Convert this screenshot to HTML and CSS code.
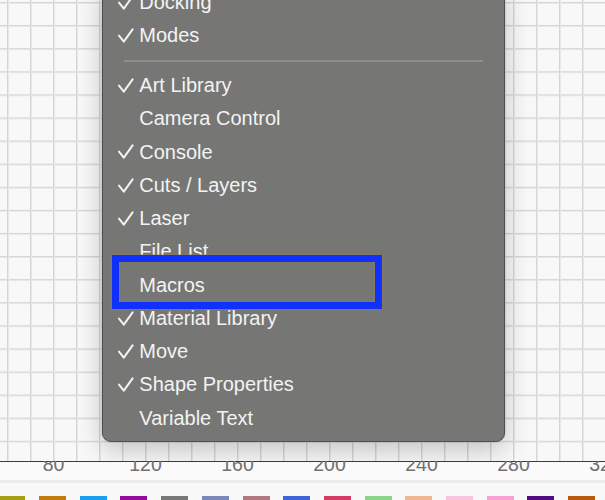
FILE: index.html
```html
<!DOCTYPE html>
<html>
<head>
<meta charset="utf-8">
<link rel="stylesheet" href="styles.css">
</head>
<body>
<div class="canvas">
  <div class="menu">
    <div class="item"><span class="mark"><svg viewBox="0 0 16 15" width="16" height="15"><path d="M1 7.6 L5.8 13.6 L14.6 1.4"/></svg></span>Docking</div>
    <div class="item"><span class="mark"><svg viewBox="0 0 16 15" width="16" height="15"><path d="M1 7.6 L5.8 13.6 L14.6 1.4"/></svg></span>Modes</div>
    <div class="sep"></div>
    <div class="item"><span class="mark"><svg viewBox="0 0 16 15" width="16" height="15"><path d="M1 7.6 L5.8 13.6 L14.6 1.4"/></svg></span>Art Library</div>
    <div class="item"><span class="mark"></span>Camera Control</div>
    <div class="item"><span class="mark"><svg viewBox="0 0 16 15" width="16" height="15"><path d="M1 7.6 L5.8 13.6 L14.6 1.4"/></svg></span>Console</div>
    <div class="item"><span class="mark"><svg viewBox="0 0 16 15" width="16" height="15"><path d="M1 7.6 L5.8 13.6 L14.6 1.4"/></svg></span>Cuts / Layers</div>
    <div class="item"><span class="mark"><svg viewBox="0 0 16 15" width="16" height="15"><path d="M1 7.6 L5.8 13.6 L14.6 1.4"/></svg></span>Laser</div>
    <div class="item"><span class="mark"></span>File List</div>
    <div class="item"><span class="mark"></span>Macros</div>
    <div class="item"><span class="mark"><svg viewBox="0 0 16 15" width="16" height="15"><path d="M1 7.6 L5.8 13.6 L14.6 1.4"/></svg></span>Material Library</div>
    <div class="item"><span class="mark"><svg viewBox="0 0 16 15" width="16" height="15"><path d="M1 7.6 L5.8 13.6 L14.6 1.4"/></svg></span>Move</div>
    <div class="item"><span class="mark"><svg viewBox="0 0 16 15" width="16" height="15"><path d="M1 7.6 L5.8 13.6 L14.6 1.4"/></svg></span>Shape Properties</div>
    <div class="item"><span class="mark"></span>Variable Text</div>
  </div>
  <div class="highlight"></div>
</div>
<div class="ruler">
  <span class="tick">80</span>
  <span class="tick">120</span>
  <span class="tick">160</span>
  <span class="tick">200</span>
  <span class="tick">240</span>
  <span class="tick">280</span>
  <span class="tick">320</span>
</div>
<div class="band"></div>
<div class="palette">
  <span class="sw c1"></span>
  <span class="sw c2"></span>
  <span class="sw c3"></span>
  <span class="sw c4"></span>
  <span class="sw c5"></span>
  <span class="sw c6"></span>
  <span class="sw c7"></span>
  <span class="sw c8"></span>
  <span class="sw c9"></span>
  <span class="sw c10"></span>
  <span class="sw c11"></span>
  <span class="sw c12"></span>
  <span class="sw c13"></span>
  <span class="sw c14"></span>
  <span class="sw c15"></span>
</div>
</body>
</html>
```
FILE: styles.css
```css
html, body {
  margin: 0;
  padding: 0;
  width: 605px;
  height: 500px;
  overflow: hidden;
  background: #f8f8f8;
  font-family: "Liberation Sans", Arial, sans-serif;
}

.canvas {
  position: relative;
  height: 460.5px;
  overflow: hidden;
  background-color: #f8f8f8;
  background-image:
    linear-gradient(to right, #d5d5d5 0 1px, #e8e8e8 1px 2px, transparent 2px),
    linear-gradient(to bottom, #d5d5d5 0 1px, #e8e8e8 1px 2px, transparent 2px);
  background-size: 23px 100%, 100% 23.1px;
  background-position: 7px 0, 0 2px;
}

.menu {
  position: absolute;
  left: 102px;
  top: -15.1px;
  width: 401px;
  padding-bottom: 6.5px;
  background: #767775;
  border: 1px solid #4e4f4e;
  border-radius: 0 0 9px 9px;
  box-shadow: 0 0 0 0.5px rgba(170,170,170,0.6), 0 8px 26px rgba(0,0,0,0.22);
  color: #f3f3f3;
  font-size: 20px;
}

.item {
  display: flex;
  align-items: center;
  height: 33.25px;
  line-height: 33.25px;
  padding-left: 15.3px;
  white-space: nowrap;
}

.mark {
  display: flex;
  align-items: center;
  width: 21px;
  height: 15px;
  flex: 0 0 21px;
  margin-top: -1px;
}

.mark svg path {
  fill: none;
  stroke: #f3f3f3;
  stroke-width: 2;
  stroke-linecap: round;
  stroke-linejoin: round;
}

.sep {
  height: 16.75px;
  display: flex;
  align-items: center;
  padding: 0 21px 0 21px;
}

.sep::before {
  content: "";
  display: block;
  flex: 1;
  height: 1.5px;
  background: #8e8f8d;
}

.highlight {
  position: absolute;
  left: 112px;
  top: 255px;
  width: 256.3px;
  height: 39.5px;
  border: 7.5px solid #0f31fb;
  box-shadow: 0 0 0 0.6px rgba(150,130,70,0.7), inset 0 0 0 0.6px rgba(150,130,70,0.7);
}

.ruler {
  display: flex;
  height: 18px;
  padding-left: 7.5px;
  border-top: 1.5px solid #3b3b3b;
  background: #fafafa;
}

.tick {
  flex: 0 0 92px;
  text-align: center;
  font-size: 19.5px;
  line-height: 19px;
  height: 19px;
  margin-top: -6.6px;
  color: #707070;
}

.band {
  height: 3.5px;
  background: #ececec;
}

.palette {
  display: flex;
  gap: 13.7px;
  padding-top: 13.2px;
  margin-left: -1.6px;
  background: #f8f8f8;
}

.sw {
  flex: 0 0 27px;
  height: 12px;
}

.c1 { background: #a39e12; }
.c2 { background: #c27c0e; }
.c3 { background: #1a9ff0; }
.c4 { background: #940c9c; }
.c5 { background: #787878; }
.c6 { background: #7a88b8; }
.c7 { background: #b27882; }
.c8 { background: #3e64d8; }
.c9 { background: #d43c66; }
.c10 { background: #8ad48a; }
.c11 { background: #f0b890; }
.c12 { background: #f8c4e0; }
.c13 { background: #f8a0d4; }
.c14 { background: #520c82; }
.c15 { background: #b85a0e; }
```
